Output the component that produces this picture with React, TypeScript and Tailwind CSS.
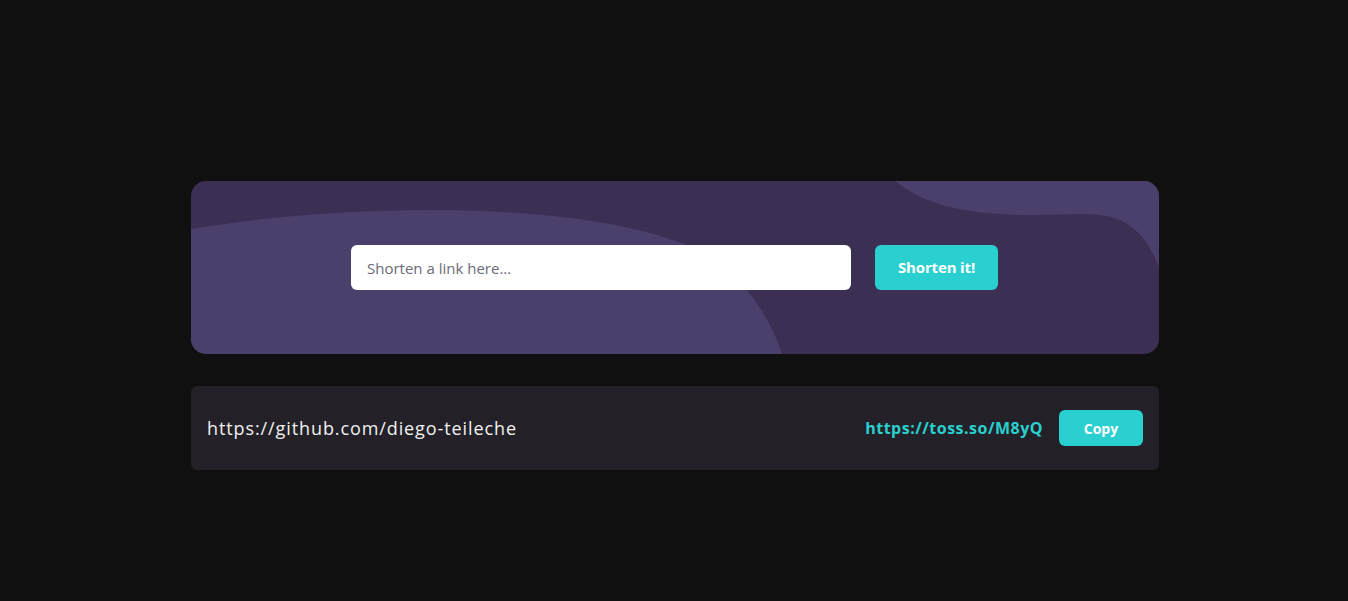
import React from "react";

const font = { fontFamily: '"Open Sans", "Liberation Sans", sans-serif' };

function Waves() {
  return (
    <svg
      className="pointer-events-none absolute inset-0 h-full w-full"
      viewBox="0 0 968 173"
      preserveAspectRatio="none"
    >
      <path
        d="M0,48 C70,36 160,29 240,29 C340,29 440,40 500,66 C545,88 575,125 591,173 L0,173 Z"
        fill="#4b3f6b"
      />
      <path
        d="M704,0 C730,20 760,32 830,34 C880,35 910,28 935,42 C955,55 962,72 968,87 L968,0 Z"
        fill="#4b3f6b"
      />
    </svg>
  );
}

export default function App() {
  return (
    <div className="min-h-[601px] w-full bg-[#101010] pl-[2px] pt-[181px]" style={font}>
      <div className="mx-auto flex w-[968px] flex-col gap-8">
        {/* Shorten form */}
        <div className="relative flex h-[173px] items-center gap-6 overflow-hidden rounded-[15px] bg-[#3b3054] pl-[160px]">
          <Waves />
          <input
            type="text"
            placeholder="Shorten a link here..."
            className="relative h-[45px] w-[500px] rounded-[6px] bg-white px-4 text-[15px] text-gray-800 outline-none placeholder:text-[#6b6b78]"
          />
          <button className="relative h-[45px] w-[123px] rounded-[6px] bg-[#2acfcf] text-[15px] font-bold tracking-[-0.01em] text-white">
            Shorten it!
          </button>
        </div>

        {/* Result */}
        <div className="flex h-[84px] items-center justify-between rounded-[6px] bg-[#232127] px-4">
          <span className="text-[18px] font-medium tracking-[0.05em] text-[#f1f1f1]">
            https://github.com/diego-teileche
          </span>
          <div className="flex items-center gap-4">
            <span className="text-[16px] font-bold tracking-[0.03em] text-[#2acfcf]">https://toss.so/M8yQ</span>
            <button className="h-9 w-[84px] rounded-[6px] bg-[#2acfcf] text-[14px] font-bold text-white">
              Copy
            </button>
          </div>
        </div>
      </div>
    </div>
  );
}
